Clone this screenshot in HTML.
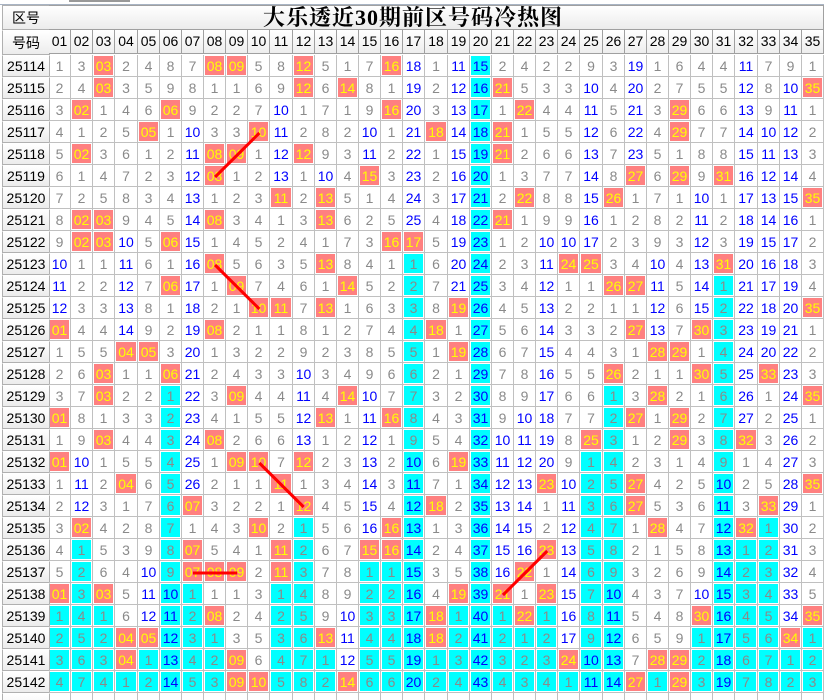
<!DOCTYPE html>
<html><head><meta charset="utf-8">
<style>
html,body{margin:0;padding:0;background:#fff;width:824px;height:700px;overflow:hidden;position:relative;font-family:"Liberation Sans","DejaVu Sans",sans-serif}
.c{position:absolute;box-sizing:border-box;border-right:1px solid #c0c0c0;border-bottom:1px solid #c0c0c0;text-align:center;font-size:14px;line-height:21px;color:#8a8a8a}
.c i{position:absolute;left:1px;top:1px;right:1px;bottom:1px;font-style:normal}
.b{color:#0000ff}
.h i{background:#ff8080;color:#ffff00}
.y i{background:#00ffff}
.lab{position:absolute;box-sizing:border-box;left:2px;width:48px;border:1px solid #b0b0b0;border-top-color:#fff;background:linear-gradient(#ffffff,#ececec);text-align:center;font-size:14px;color:#000;font-family:"Liberation Sans","Noto Sans CJK SC",sans-serif}
.hd{position:absolute;box-sizing:border-box;border-right:1px solid #a0a0a0;border-bottom:1px solid #a0a0a0;background:linear-gradient(#ffffff,#eeeeee);text-align:center;font-size:14px;line-height:23px;color:#000;top:30px;height:24px}
</style></head><body>
<div style="position:absolute;left:69px;top:0;width:61px;height:2px;background:#999"></div>
<div style="position:absolute;left:0;top:4px;width:824px;height:1px;background:#a8b4c4"></div>
<div class="lab" style="top:5px;height:25px;line-height:24px;border-top-color:#b0b0b0">区号</div>
<div style="position:absolute;left:49px;top:5px;width:775px;height:25px;box-sizing:border-box;border:1px solid #a0a0a0;border-left:none;background:linear-gradient(#ffffff,#ececec)"></div>
<div style="position:absolute;left:263px;top:4px;font:bold 22px 'Liberation Serif','Noto Serif CJK SC',serif;letter-spacing:1px;color:#000;line-height:28px">大乐透近30期前区号码冷热图</div>
<div class="lab" style="top:30px;height:25px;line-height:24px">号码</div>
<div id="g"></div>
<svg id="s" width="824" height="700" style="position:absolute;left:0;top:0"></svg>
<script>
var D=[
"25114|1 3 * 2 4 8 7 * * 5 8 * 5 1 7 * 18 1 11 15 2 4 2 2 9 3 19 1 6 4 4 11 7 9 1",
"25115|2 4 * 3 5 9 8 1 1 6 9 * 6 * 8 1 19 2 12 16 * 5 3 3 10 4 20 2 7 5 5 12 8 10 *",
"25116|3 * 1 4 6 * 9 2 2 7 10 1 7 1 9 * 20 3 13 17 1 * 4 4 11 5 21 3 * 6 6 13 9 11 1",
"25117|4 1 2 5 * 1 10 3 3 * 11 2 8 2 10 1 21 * 14 18 * 1 5 5 12 6 22 4 * 7 7 14 10 12 2",
"25118|5 * 3 6 1 2 11 * * 1 12 * 9 3 11 2 22 1 15 19 * 2 6 6 13 7 23 5 1 8 8 15 11 13 3",
"25119|6 1 4 7 2 3 12 * 1 2 13 1 10 4 * 3 23 2 16 20 1 3 7 7 14 8 * 6 * 9 * 16 12 14 4",
"25120|7 2 5 8 3 4 13 1 2 3 * 2 * 5 1 4 24 3 17 21 2 * 8 8 15 * 1 7 1 10 1 17 13 15 *",
"25121|8 * * 9 4 5 14 * 3 4 1 3 * 6 2 5 25 4 18 22 * 1 9 9 16 1 2 8 2 11 2 18 14 16 1",
"25122|9 * * 10 5 * 15 1 4 5 2 4 1 7 3 * * 5 19 23 1 2 10 10 17 2 3 9 3 12 3 19 15 17 2",
"25123|10 1 1 11 6 1 16 * 5 6 3 5 * 8 4 1 1 6 20 24 2 3 11 * * 3 4 10 4 13 * 20 16 18 3",
"25124|11 2 2 12 7 * 17 1 * 7 4 6 1 * 5 2 2 7 21 25 3 4 12 1 1 * * 11 5 14 1 21 17 19 4",
"25125|12 3 3 13 8 1 18 2 1 * * 7 * 1 6 3 3 8 * 26 4 5 13 2 2 1 1 12 6 15 2 22 18 20 *",
"25126|* 4 4 14 9 2 19 * 2 1 1 8 1 2 7 4 4 * 1 27 5 6 14 3 3 2 * 13 7 * 3 23 19 21 1",
"25127|1 5 5 * * 3 20 1 3 2 2 9 2 3 8 5 5 1 * 28 6 7 15 4 4 3 1 * * 1 4 24 20 22 2",
"25128|2 6 * 1 1 * 21 2 4 3 3 10 3 4 9 6 6 2 1 29 7 8 16 5 5 * 2 1 1 * 5 25 * 23 3",
"25129|3 7 * 2 2 1 22 3 * 4 4 11 4 * 10 7 7 3 2 30 8 9 17 6 6 1 3 * 2 1 6 26 1 24 *",
"25130|* 8 1 3 3 2 23 4 1 5 5 12 * 1 11 * 8 4 3 31 9 10 18 7 7 2 * 1 * 2 7 27 2 25 1",
"25131|1 9 * 4 4 3 24 * 2 6 6 13 1 2 12 1 9 5 4 32 10 11 19 8 * 3 1 2 * 3 8 * 3 26 2",
"25132|* 10 1 5 5 4 25 1 * * 7 * 2 3 13 2 10 6 * 33 11 12 20 9 1 4 2 3 1 4 9 1 4 27 3",
"25133|1 11 2 * 6 5 26 2 1 1 * 1 3 4 14 3 11 7 1 34 12 13 * 10 2 5 * 4 2 5 10 2 5 28 *",
"25134|2 12 3 1 7 6 * 3 2 2 1 * 4 5 15 4 12 * 2 35 13 14 1 11 3 6 * 5 3 6 11 3 * 29 1",
"25135|3 * 4 2 8 7 1 4 3 * 2 1 5 6 16 * 13 1 3 36 14 15 2 12 4 7 1 * 4 7 12 * 1 30 2",
"25136|4 1 5 3 9 8 * 5 4 1 * 2 6 7 * * 14 2 4 37 15 16 * 13 5 8 2 1 5 8 13 1 2 31 3",
"25137|5 2 6 4 10 9 * * * 2 * 3 7 8 1 1 15 3 5 38 16 * 1 14 6 9 3 2 6 9 14 2 3 32 4",
"25138|* 3 * 5 11 10 1 1 1 3 1 4 8 9 2 2 16 4 * 39 * 1 * 15 7 10 4 3 7 10 15 3 4 33 5",
"25139|1 4 1 6 12 11 2 * 2 4 2 5 9 10 3 3 17 * 1 40 1 * 1 16 8 11 5 4 8 * 16 4 5 34 *",
"25140|2 5 2 * * 12 3 1 3 5 3 6 * 11 4 4 18 * 2 41 2 1 2 17 9 12 6 5 9 1 17 5 6 * 1",
"25141|3 6 3 * 1 13 4 2 * 6 4 7 1 12 5 5 19 1 3 42 3 2 3 * 10 13 7 * * 2 18 6 7 1 2",
"25142|4 7 4 1 2 14 5 3 * * 5 8 2 * 6 6 20 2 4 43 4 3 4 1 11 14 * 1 * 3 19 7 8 2 3"];
var W=775/35,X0=49,Y0=55,H=22,h='';
function cx(k){return X0+k*W;}
for(var k=0;k<35;k++){var l=Math.round(cx(k)),r=Math.round(cx(k+1));
 h+='<div class="hd" style="left:'+l+'px;width:'+(r-l)+'px">'+(k<9?'0':'')+(k+1)+'</div>';}
var rows=D.map(function(s){var p=s.split('|');return [p[0],p[1].split(' ')];});
var last=[];for(k=0;k<35;k++){last[k]=-1;for(var i=0;i<rows.length;i++)if(rows[i][1][k]=='*')last[k]=i;}
for(var i=0;i<=rows.length;i++){var y=Y0+i*H;
 h+='<div class="lab" style="top:'+y+'px;height:'+H+'px;line-height:20px">'+(rows[i]?rows[i][0]:'')+'</div>';
 for(k=0;k<35;k++){var l=Math.round(cx(k)),r=Math.round(cx(k+1));var v=rows[i]?rows[i][1][k]:'';var cls='c',t=v;
  if(v=='*'){cls+=' h';t=(k<9?'0':'')+(k+1);}else if(v!==''){if(+v>=10)cls+=' b';if(i>last[k])cls+=' y';}
  h+='<div class="'+cls+'" style="left:'+l+'px;top:'+y+'px;width:'+(r-l)+'px;height:'+H+'px"><i>'+t+'</i></div>';}}
document.getElementById('g').innerHTML=h;
function P(r,c){return [cx(c-1)+W/2,Y0+r*H+H/2+1];}
var L=[[3,10,5,8],[9,8,11,10],[18,10,20,12],[23,7,23,9],[22,23,24,21]],sv='';
L.forEach(function(a){var p=P(a[0],a[1]),q=P(a[2],a[3]);sv+='<line x1="'+p[0]+'" y1="'+p[1]+'" x2="'+q[0]+'" y2="'+q[1]+'" stroke="#ff0000" stroke-width="3"/>';});
document.getElementById('s').innerHTML=sv;
</script>
</body></html>
